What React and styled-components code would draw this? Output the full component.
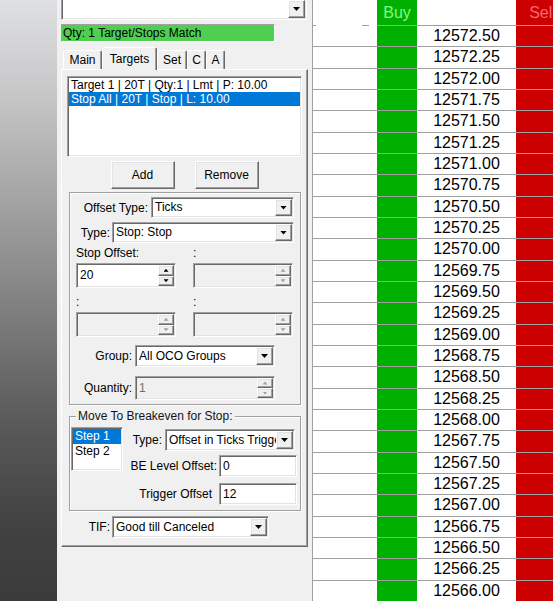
import React from "react";
import styled, { createGlobalStyle, css } from "styled-components";

const GlobalStyle = createGlobalStyle`
  html, body {
    margin: 0;
    padding: 0;
  }
  body {
    font-family: "Liberation Sans", Arial, sans-serif;
    font-size: 12px;
    color: #000;
    background: #f0f0f0;
  }
`;

const sunken = css`
  border: 1px solid;
  border-color: #a0a0a0 #ffffff #ffffff #a0a0a0;
  box-shadow: inset 1px 1px 0 #696969, inset -1px -1px 0 #e3e3e3;
`;

const raised = css`
  border: 1px solid;
  border-color: #ffffff #696969 #696969 #ffffff;
  box-shadow: inset -1px -1px 0 #a0a0a0, inset 1px 1px 0 #e3e3e3;
`;

const Screen = styled.div`
  display: flex;
  width: 553px;
  height: 601px;
  overflow: hidden;
`;

const LeftStrip = styled.div`
  width: 57px;
  flex: none;
  background: linear-gradient(
    to bottom,
    #dfe0e3 0%,
    #c6c6c7 16%,
    #8c8c8c 45%,
    #5a5a5a 70%,
    #414141 88%,
    #3b3b3b 100%
  );
`;

const Panel = styled.div`
  width: 255px;
  flex: none;
  box-sizing: border-box;
  padding-left: 4px;
  background: #f0f0f0;
  display: flex;
  flex-direction: column;
`;

/* ---------- generic win32 style controls ---------- */

const Field = styled.div`
  ${sunken};
  box-sizing: border-box;
  width: ${(p) => p.$w}px;
  height: ${(p) => p.$h}px;
  padding: 1px;
  flex: none;
  display: flex;
  align-items: stretch;
  background: ${(p) => (p.$disabled ? "#f0f0f0" : "#ffffff")};
`;

const FieldValue = styled.div`
  flex: 1;
  min-width: 0;
  padding-left: 2px;
  line-height: ${(p) => p.$h - 4}px;
  white-space: nowrap;
  overflow: hidden;
  color: ${(p) => (p.$disabled ? "#6d6d6d" : "#000")};
`;

const DropButton = styled.div`
  ${raised};
  box-sizing: border-box;
  width: 17px;
  flex: none;
  background: #f0f0f0;
  display: flex;
  align-items: center;
  justify-content: center;
`;

const Arrow = styled.span`
  display: block;
  width: ${(p) => p.$w}px;
  height: ${(p) => p.$hgt}px;
  background: ${(p) => (p.$disabled ? "#a0a0a0" : "#000")};
  clip-path: ${(p) =>
    p.$dir === "up"
      ? "polygon(50% 0, 100% 100%, 0 100%)"
      : "polygon(0 0, 100% 0, 50% 100%)"};
`;

const SpinButtons = styled.div`
  width: 16px;
  flex: none;
  display: flex;
  flex-direction: column;
`;

const SpinButton = styled.div`
  ${raised};
  box-sizing: border-box;
  flex: 1;
  background: #f0f0f0;
  display: flex;
  align-items: center;
  justify-content: center;
`;

const Combo = ({ className, w, h = 22, value, disabled }) => (
  <Field className={className} $w={w} $h={h} $disabled={disabled}>
    <FieldValue $h={h}>{value}</FieldValue>
    <DropButton>
      <Arrow $dir="down" $w={7} $hgt={4} />
    </DropButton>
  </Field>
);

const Spinner = ({ w = 100, h = 25, value, disabled }) => (
  <Field $w={w} $h={h} $disabled={disabled}>
    <FieldValue $h={h} $disabled={disabled}>
      {value}
    </FieldValue>
    <SpinButtons>
      <SpinButton>
        <Arrow $dir="up" $w={5} $hgt={3} $disabled={disabled} />
      </SpinButton>
      <SpinButton>
        <Arrow $dir="down" $w={5} $hgt={3} $disabled={disabled} />
      </SpinButton>
    </SpinButtons>
  </Field>
);

const TextBox = ({ w = 78, h = 22, value }) => (
  <Field $w={w} $h={h}>
    <FieldValue $h={h}>{value}</FieldValue>
  </Field>
);

/* ---------- panel parts ---------- */

const TopCombo = styled(Combo)`
  margin-top: -2px;
`;

const QtyBar = styled.div`
  box-sizing: border-box;
  width: 214px;
  height: 18px;
  margin-top: 4px;
  padding-left: 1px;
  line-height: 16px;
  background: #4ecf50;
  border: 1px solid;
  border-color: #a0a0a0 #ffffff #ffffff #a0a0a0;
  white-space: nowrap;
`;

const TabStrip = styled.div`
  position: relative;
  z-index: 2;
  height: 22px;
  margin-top: 5px;
  padding-left: 2px;
  display: flex;
  align-items: flex-end;
`;

const Tab = styled.div`
  box-sizing: border-box;
  width: ${(p) => p.$w}px;
  height: ${(p) => (p.$active ? 23 : 19)}px;
  margin-bottom: ${(p) => (p.$active ? -1 : 0)}px;
  border: 1px solid;
  border-bottom: none;
  border-color: #ffffff #696969 transparent #ffffff;
  border-radius: 2px 2px 0 0;
  box-shadow: inset -1px 0 0 #a0a0a0;
  background: #f0f0f0;
  display: flex;
  align-items: center;
  justify-content: center;
  white-space: nowrap;
`;

const TabPage = styled.div`
  box-sizing: border-box;
  width: 247px;
  height: 478px;
  padding: 6px 5px 0 5px;
  border: 1px solid;
  border-color: #ffffff #696969 #696969 #ffffff;
  box-shadow: inset -1px -1px 0 #a0a0a0;
  display: flex;
  flex-direction: column;
`;

const ListBox = styled.div`
  ${sunken};
  box-sizing: border-box;
  height: ${(p) => p.$h}px;
  width: ${(p) => (p.$w ? `${p.$w}px` : "auto")};
  flex: none;
  padding: 1px;
  background: #ffffff;
`;

const ListItem = styled.div`
  height: ${(p) => p.$h || 14}px;
  line-height: ${(p) => p.$h || 14}px;
  padding-left: 2px;
  white-space: nowrap;
  overflow: hidden;
  background: ${(p) => (p.$selected ? "#0078d7" : "transparent")};
  color: ${(p) => (p.$selected ? "#ffffff" : "#000")};
`;

const ButtonRow = styled.div`
  margin-top: 4px;
  display: flex;
  justify-content: center;
  gap: 20px;
`;

const Button = styled.div`
  ${raised};
  box-sizing: border-box;
  width: 64px;
  height: 28px;
  background: #f0f0f0;
  display: flex;
  align-items: center;
  justify-content: center;
`;

const GroupBox = styled.div`
  position: relative;
  box-sizing: border-box;
  margin: ${(p) => p.$mt}px 1px 0 2px;
  height: ${(p) => (p.$h ? `${p.$h}px` : "auto")};
  border: 1px solid #a0a0a0;
  box-shadow: inset 1px 1px 0 #ffffff, 1px 1px 0 #ffffff;
  padding: ${(p) => p.$pad};
  display: flex;
  flex-direction: ${(p) => p.$dir || "column"};
`;

const Legend = styled.span`
  position: absolute;
  top: -8px;
  left: 6px;
  padding: 0 2px;
  line-height: 14px;
  background: #f0f0f0;
  color: #141414;
  white-space: nowrap;
`;

const FormRow = styled.div`
  margin-top: ${(p) => p.$mt || 0}px;
  padding-right: ${(p) => p.$pr || 0}px;
  display: flex;
  align-items: center;
  justify-content: flex-end;
  gap: ${(p) => p.$gap || 2}px;
`;

const Label = styled.span`
  line-height: 14px;
  white-space: nowrap;
`;

const SpinGrid = styled.div`
  margin-top: ${(p) => p.$mt}px;
  padding-left: 6px;
  display: grid;
  grid-template-columns: 100px 100px;
  column-gap: 17px;
  line-height: 14px;
`;

const BreakevenFields = styled.div`
  flex: 1;
  margin-top: 2px;
  display: flex;
  flex-direction: column;
`;

/* ---------- price ladder ---------- */

const Ladder = styled.div`
  flex: 1;
  border-left: 1px solid #a0a0a0;
  background: #ffffff;
  overflow: hidden;
  display: flex;
  flex-direction: column;
`;

const HeaderRow = styled.div`
  display: flex;
  height: 26px;
  flex: none;
`;

const HeadCell = styled.div`
  box-sizing: border-box;
  width: ${(p) => p.$w}px;
  flex: none;
  height: 26px;
  background: ${(p) => p.$bg};
  border-bottom: ${(p) => (p.$noLine ? "none" : "1px solid #a0a0a0")};
  color: ${(p) => p.$color || "#000"};
  font-size: 16px;
  line-height: 25px;
  text-align: center;
  white-space: nowrap;
  overflow: hidden;
`;

const BlankHead = styled(HeadCell)`
  background-image: linear-gradient(#a0a0a0, #a0a0a0),
    linear-gradient(#a0a0a0, #a0a0a0);
  background-repeat: no-repeat;
  background-size: 3px 1px, 7px 1px;
  background-position: 0 25px, 49px 25px;
`;

const LadderRow = styled.div`
  box-sizing: border-box;
  display: flex;
  height: 21.33px;
  flex: none;
  border-bottom: 1px solid #a0a0a0;
`;

const Cell = styled.div`
  width: ${(p) => p.$w}px;
  flex: none;
  background: ${(p) => p.$bg};
  font-size: 16px;
  line-height: 20px;
  text-align: center;
`;

const cols = { blank: 64, buy: 40, price: 99, sell: 53 };
const GREEN = "#00b000";
const RED = "#cc0000";

const prices = Array.from({ length: 27 }, (_, i) =>
  (12572.5 - i * 0.25).toFixed(2)
);

export default function App() {
  return (
    <>
      <GlobalStyle />
      <Screen>
        <LeftStrip />
        <Panel>
          <TopCombo w={246} h={22} value="" />
          <QtyBar>Qty: 1 Target/Stops Match</QtyBar>
          <TabStrip>
            <Tab $w={39}>Main</Tab>
            <Tab $w={55} $active>
              Targets
            </Tab>
            <Tab $w={30}>Set</Tab>
            <Tab $w={19}>C</Tab>
            <Tab $w={19}>A</Tab>
          </TabStrip>
          <TabPage>
            <ListBox $h={81}>
              <ListItem>Target 1 | 20T | Qty:1 | Lmt | P: 10.00</ListItem>
              <ListItem $selected>Stop All | 20T | Stop | L: 10.00</ListItem>
            </ListBox>
            <ButtonRow>
              <Button>Add</Button>
              <Button>Remove</Button>
            </ButtonRow>

            <GroupBox $mt={3} $pad="4px 0 4px 0">
              <FormRow $pr={6} $gap={3}>
                <Label>Offset Type:</Label>
                <Combo w={143} h={21} value="Ticks" />
              </FormRow>
              <FormRow $mt={4} $pr={6} $gap={2}>
                <Label>Type:</Label>
                <Combo w={182} h={21} value="Stop: Stop" />
              </FormRow>
              <SpinGrid $mt={3}>
                <Label>Stop Offset:</Label>
                <Label>:</Label>
              </SpinGrid>
              <SpinGrid $mt={3}>
                <Spinner value="20" />
                <Spinner disabled />
              </SpinGrid>
              <SpinGrid $mt={7}>
                <Label>:</Label>
                <Label>:</Label>
              </SpinGrid>
              <SpinGrid $mt={3}>
                <Spinner disabled />
                <Spinner disabled />
              </SpinGrid>
              <FormRow $mt={8} $pr={25} $gap={3}>
                <Label>Group:</Label>
                <Combo w={140} h={22} value="All OCO Groups" />
              </FormRow>
              <FormRow $mt={9} $pr={25} $gap={3}>
                <Label>Quantity:</Label>
                <Spinner w={140} h={24} value="1" disabled />
              </FormRow>
            </GroupBox>

            <GroupBox $mt={11} $h={95} $dir="row" $pad="10px 0 0 1px">
              <Legend>Move To Breakeven for Stop:</Legend>
              <ListBox $w={52} $h={44}>
                <ListItem $h={15} $selected>
                  Step 1
                </ListItem>
                <ListItem $h={15}>Step 2</ListItem>
              </ListBox>
              <BreakevenFields>
                <FormRow $pr={5} $gap={3}>
                  <Label>Type:</Label>
                  <Combo w={130} h={22} value="Offset in Ticks Trigger" />
                </FormRow>
                <FormRow $mt={4} $pr={3} $gap={2}>
                  <Label>BE Level Offset:</Label>
                  <TextBox value="0" />
                </FormRow>
                <FormRow $mt={6} $pr={3} $gap={7}>
                  <Label>Trigger Offset</Label>
                  <TextBox value="12" />
                </FormRow>
              </BreakevenFields>
            </GroupBox>

            <FormRow $mt={5} $pr={33} $gap={2}>
              <Label>TIF:</Label>
              <Combo w={157} h={22} value="Good till Canceled" />
            </FormRow>
          </TabPage>
        </Panel>

        <Ladder>
          <HeaderRow>
            <BlankHead $w={cols.blank} $bg="#ffffff" $noLine />
            <HeadCell $w={cols.buy} $bg={GREEN} $color="#84f884">
              Buy
            </HeadCell>
            <HeadCell $w={cols.price} $bg="#ffffff" />
            <HeadCell $w={cols.sell} $bg={RED} $color="#f66a6a">
              Sell
            </HeadCell>
          </HeaderRow>
          {prices.map((price) => (
            <LadderRow key={price}>
              <Cell $w={cols.blank} $bg="#ffffff" />
              <Cell $w={cols.buy} $bg={GREEN} />
              <Cell $w={cols.price} $bg="#ffffff">
                {price}
              </Cell>
              <Cell $w={cols.sell} $bg={RED} />
            </LadderRow>
          ))}
        </Ladder>
      </Screen>
    </>
  );
}
